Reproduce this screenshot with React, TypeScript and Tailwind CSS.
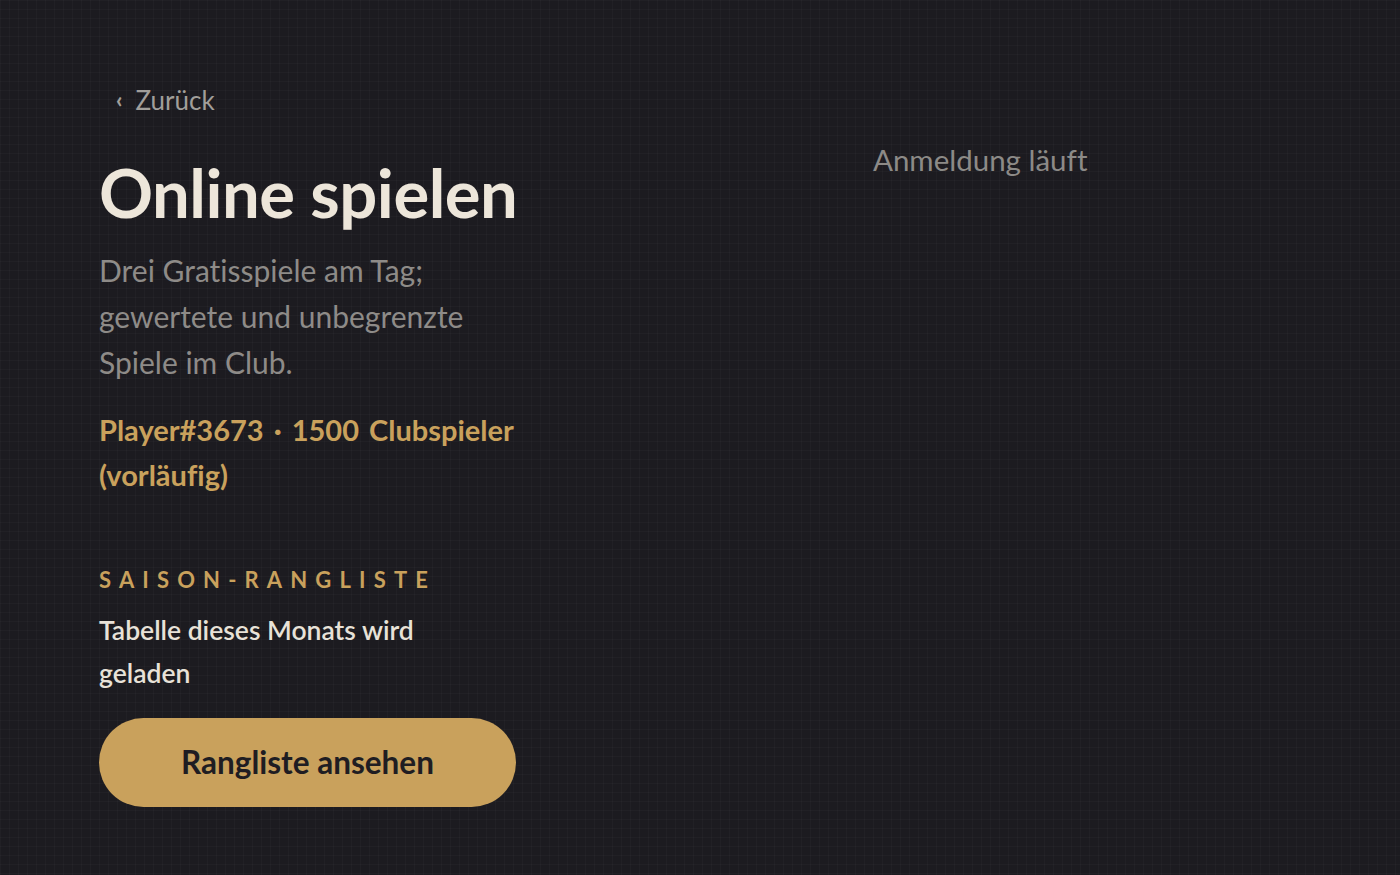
import React from "react";

export default function App() {
  return (
    <div className="min-h-[875px] w-full bg-[#1c1b20] bg-[linear-gradient(rgba(255,255,255,0.025)_1px,transparent_1px),linear-gradient(90deg,rgba(255,255,255,0.025)_1px,transparent_1px)] bg-[size:9px_9px] font-['Lato','Noto_Sans',sans-serif] [font-variant-ligatures:none]">
      <div className="grid grid-cols-[417px_1fr] gap-[140px] px-[99px] pt-[80px]">
        <div className="flex flex-col items-start">
          <button className="flex items-center gap-[13px] pl-[17px] text-[26px] leading-[40px] text-[#a19e9a]">
            <span className="text-[22px] font-black">‹</span>
            <span>Zurück</span>
          </button>
          <h1 className="mt-[34px] whitespace-nowrap text-[67px] font-bold leading-[76px] tracking-[-0.5px] text-[#ede6da]">Online spielen</h1>
          <p className="mt-[17px] w-[375px] text-[30px] leading-[46px] text-[#8e8b88]">
            Drei Gratisspiele am Tag; gewertete und unbegrenzte Spiele im Club.
          </p>
          <p className="mt-[22px] w-[440px] text-[29px] font-bold leading-[45px] text-[#c9a15c] [word-spacing:3px]">
            Player#3673 · 1500 Clubspieler (vorläufig)
          </p>
          <h2 className="mt-[68px] text-[22px] font-bold uppercase leading-[30px] tracking-[0.37em] text-[#c9a15c]">Saison-Rangliste</h2>
          <p className="mt-[14px] w-[360px] text-[26.5px] font-semibold leading-[43px] text-[#e8e2d8]">
            Tabelle dieses Monats wird geladen
          </p>
          <button className="mt-[23px] h-[89px] w-[417px] rounded-full bg-[#c9a15c] text-[31.5px] font-bold text-[#1f1d22]">
            Rangliste ansehen
          </button>
        </div>
        <div className="pt-[60px] pl-[217px]">
          <span className="text-[29.5px] leading-[40px] text-[#8c8a87]">Anmeldung läuft</span>
        </div>
      </div>
    </div>
  );
}
